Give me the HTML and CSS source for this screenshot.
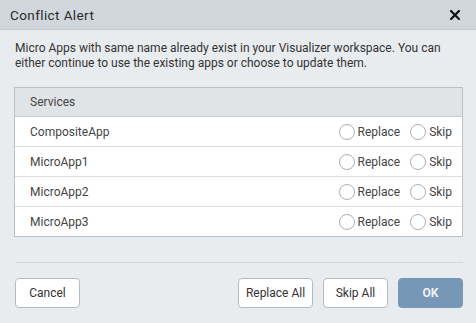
FILE: index.html
```
<!DOCTYPE html>
<html>
<head>
<meta charset="utf-8">
<link rel="stylesheet" href="styles.css">
</head>
<body>
<div class="dialog">
  <div class="header">
    <span class="title">Conflict Alert</span>
    <svg class="close" width="10" height="10" viewBox="0 0 10 10"><path d="M1 1L9 9M9 1L1 9" stroke="#111" stroke-width="2.2" stroke-linecap="square"/></svg>
  </div>
  <div class="content">
    <p class="desc">Micro Apps with same name already exist in your Visualizer workspace. You can either continue to use the existing apps or choose to update them.</p>
    <div class="table">
      <div class="thead">Services</div>
      <div class="row"><span class="name">CompositeApp</span><span class="opts"><span class="radio"></span><span class="lbl">Replace</span><span class="radio"></span><span class="lbl">Skip</span></span></div>
      <div class="row"><span class="name">MicroApp1</span><span class="opts"><span class="radio"></span><span class="lbl">Replace</span><span class="radio"></span><span class="lbl">Skip</span></span></div>
      <div class="row"><span class="name">MicroApp2</span><span class="opts"><span class="radio"></span><span class="lbl">Replace</span><span class="radio"></span><span class="lbl">Skip</span></span></div>
      <div class="row"><span class="name">MicroApp3</span><span class="opts"><span class="radio"></span><span class="lbl">Replace</span><span class="radio"></span><span class="lbl">Skip</span></span></div>
    </div>
    <div class="divider"></div>
    <div class="footer">
      <button class="btn cancel">Cancel</button>
      <div class="right">
        <button class="btn replace-all">Replace All</button>
        <button class="btn skip-all">Skip All</button>
        <button class="btn ok">OK</button>
      </div>
    </div>
  </div>
</div>
</body>
</html>
```
FILE: styles.css
```
html, body { margin: 0; padding: 0; }
body {
  width: 476px;
  height: 323px;
  background: #e9ecef;
  font-family: Roboto, "Liberation Sans", sans-serif;
  color: #333;
  overflow: hidden;
}
.dialog { width: 476px; height: 323px; display: flex; flex-direction: column; }
.header {
  height: 29px;
  background: #d1d6dc;
  display: flex;
  align-items: center;
  justify-content: space-between;
  padding: 0 16px 0 10px;
  border-bottom: 1px solid #c6ccd2;
}
.title { font-size: 13.5px; font-weight: 400; color: #2a2a2a; letter-spacing: 0.4px; }
.close { display: block; }
.content { padding: 11px 13px 0 14px; }
.desc {
  margin: 0 0 0 1px;
  font-size: 12px;
  line-height: 15px;
  color: #333;
}
.table {
  margin-top: 16px;
  border: 1px solid #b9c0c6;
  background: #fff;
}
.thead {
  height: 28px;
  background: #e1e4e7;
  border-bottom: 1px solid #c9ced3;
  display: flex;
  align-items: center;
  padding-left: 15px;
  font-size: 12px;
  color: #444;
}
.row {
  height: 29px;
  border-bottom: 1px solid #dcdfe2;
  display: flex;
  align-items: center;
  justify-content: space-between;
  padding: 0 10px 0 15px;
  font-size: 12px;
  color: #444;
}
.row:last-child { border-bottom: none; }
.opts { display: flex; align-items: center; }
.radio {
  width: 14px;
  height: 14px;
  border: 1px solid #a9b0b7;
  border-radius: 50%;
  background: #fff;
  margin-right: 3px;
}
.lbl + .radio { margin-left: 10px; }
.divider { height: 1px; background: #d3d7db; margin: 25px 0 0 1px; }
.footer {
  display: flex;
  justify-content: space-between;
  align-items: center;
  margin-top: 15px;
  padding-left: 1px;
}
.right { display: flex; gap: 10px; }
.btn {
  height: 30px;
  font-family: Roboto, "Liberation Sans", sans-serif;
  font-size: 12px;
  color: #333;
  background: #fff;
  border: 1px solid #b4bbc2;
  border-radius: 4px;
  padding: 0;
}
.cancel { width: 65px; }
.replace-all { width: 75px; }
.skip-all { width: 65px; }
.ok {
  width: 65px;
  background: #7697b6;
  border-color: #7697b6;
  color: #eef2f6;
  font-weight: 700;
}
```
